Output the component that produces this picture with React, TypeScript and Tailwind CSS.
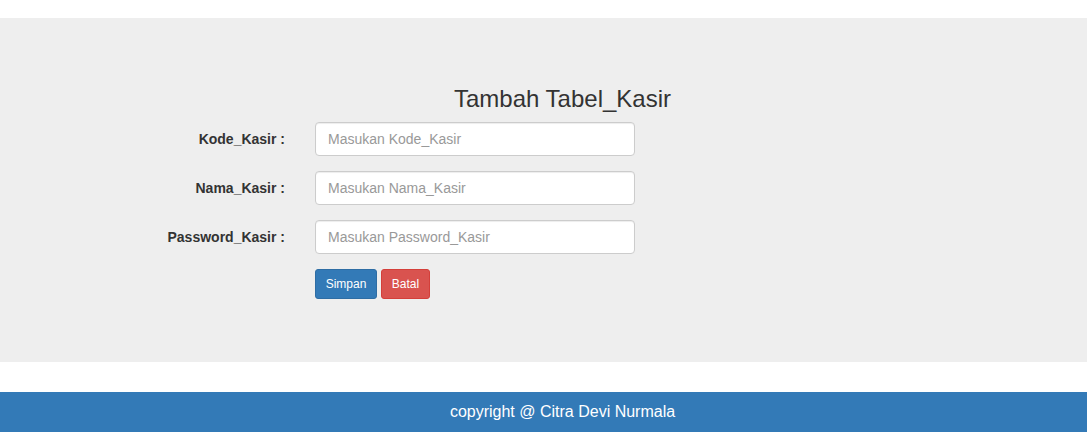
const fields = [
  { label: "Kode_Kasir :", placeholder: "Masukan Kode_Kasir" },
  { label: "Nama_Kasir :", placeholder: "Masukan Nama_Kasir" },
  { label: "Password_Kasir :", placeholder: "Masukan Password_Kasir" },
];

export default function App() {
  return (
    <div className="min-h-[446px] bg-white font-['Liberation_Sans',Arial,sans-serif] text-[14px] text-[#333]">
      {/* Jumbotron */}
      <div className="mt-[18px] bg-[#eeeeee] pt-[48px] pb-[48px]">
        <h3 className="mt-[20px] mb-[10px] pl-[38px] text-center text-[24px] font-normal leading-[1.1] text-[#333]">
          Tambah Tabel_Kasir
        </h3>

        <form onSubmit={(e) => e.preventDefault()}>
          {fields.map((f) => (
            <div key={f.label} className="mb-[15px] flex items-start">
              <label className="w-[285px] pt-[7px] text-right text-[14px] font-bold leading-[20px] text-[#333]">
                {f.label}
              </label>
              <input
                type="text"
                placeholder={f.placeholder}
                className="ml-[30px] h-[34px] w-[320px] rounded-[4px] border border-[#ccc] bg-white px-[12px] py-[6px] text-[14px] leading-[20px] text-[#555] shadow-[inset_0_1px_1px_rgba(0,0,0,0.075)] outline-none placeholder:text-[#999]"
              />
            </div>
          ))}

          <div className="mb-[15px] flex gap-[4px] pl-[315px]">
            <button
              type="submit"
              className="h-[30px] w-[62px] rounded-[3px] border border-[#2e6da4] bg-[#337ab7] text-[12px] leading-[18px] text-white"
            >
              Simpan
            </button>
            <button
              type="button"
              className="h-[30px] w-[49px] rounded-[3px] border border-[#d43f3a] bg-[#d9534f] text-[12px] leading-[18px] text-white"
            >
              Batal
            </button>
          </div>
        </form>
      </div>

      {/* Footer */}
      <footer className="mt-[30px] bg-[#337ab7] py-[10px] pl-[38px] text-center text-[16px] leading-[20px] text-white">
        copyright @ Citra Devi Nurmala
      </footer>
    </div>
  );
}
